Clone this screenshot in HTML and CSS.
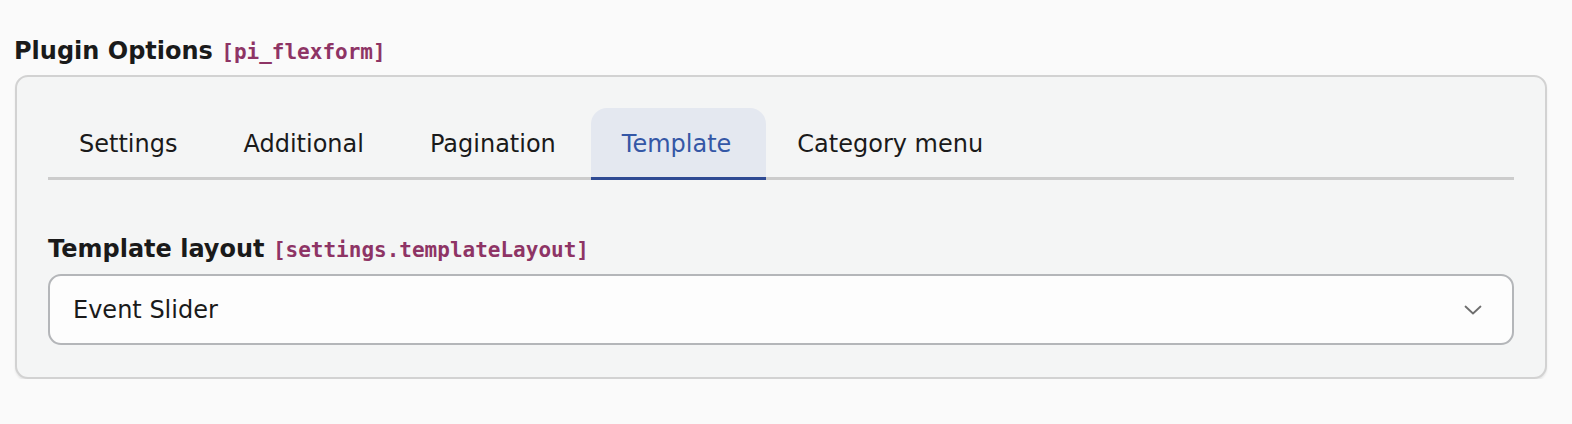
FILE: index.html
```html
<!DOCTYPE html>
<html lang="en">
<head>
<meta charset="utf-8">
<title>Plugin Options</title>
<link rel="stylesheet" href="styles.css">
</head>
<body>
<div class="page">
  <h2 class="field-label">Plugin Options <code class="field-code">[pi_flexform]</code></h2>
  <div class="card">
    <ul class="tabs">
      <li class="tab">Settings</li>
      <li class="tab">Additional</li>
      <li class="tab">Pagination</li>
      <li class="tab active">Template</li>
      <li class="tab">Category menu</li>
    </ul>
    <div class="tab-pane">
      <label class="field-label">Template layout <code class="field-code">[settings.templateLayout]</code></label>
      <div class="select">
        <span class="select-value">Event Slider</span>
        <svg class="chevron" width="18" height="10" viewBox="0 0 18 10" aria-hidden="true">
          <path d="M1.5 1.5 L9 8.5 L16.5 1.5" fill="none" stroke="#6e6e6e" stroke-width="1.8" stroke-linecap="round" stroke-linejoin="round"/>
        </svg>
      </div>
    </div>
  </div>
</div>
</body>
</html>
```

FILE: styles.css
```css
html, body {
  margin: 0;
  padding: 0;
  background: #fafafa;
}

body {
  font-family: "DejaVu Sans", Verdana, sans-serif;
  font-size: 24px;
  line-height: 36px;
  color: #1a1a1a;
}

.page {
  padding: 33px 25px 0 14px;
}

.field-label {
  display: block;
  margin: 0;
  font-size: 24px;
  line-height: 36px;
  font-weight: bold;
  color: #1a1a1a;
}

.page > .field-label {
  margin-bottom: 5px;
}

.field-code {
  font-family: "DejaVu Sans Mono", "Liberation Mono", monospace;
  font-size: 21px;
  font-weight: bold;
  color: #8e3465;
}

.card {
  margin-left: 1px;
  background: #f4f5f5;
  border: 2px solid #d2d2d2;
  border-radius: 13px;
  box-shadow: 0 2px 2px rgba(0, 0, 0, 0.08);
  padding: 31px 31px 32px 31px;
}

.tabs {
  list-style: none;
  margin: 0;
  padding: 0;
  display: flex;
  border-bottom: 3px solid #cccccc;
}

.tab {
  padding: 18px 35px 15px 31px;
  line-height: 36px;
  border-bottom: 3px solid transparent;
  margin-bottom: -3px;
  border-radius: 16px 16px 0 0;
  color: #1a1a1a;
  white-space: nowrap;
}

.tab.active {
  background: #e4e8f0;
  color: #3457a6;
  border-bottom-color: #2e4a93;
}

.tab-pane {
  padding-top: 51px;
}

.tab-pane .field-label {
  margin-bottom: 6px;
}

.select {
  display: flex;
  align-items: center;
  justify-content: space-between;
  box-sizing: border-box;
  height: 71px;
  padding: 0 30px 0 23px;
  background: #fdfdfd;
  border: 2px solid #b4b6b9;
  border-radius: 13px;
}

.select-value {
  color: #1a1a1a;
}

.chevron {
  display: block;
}
```
